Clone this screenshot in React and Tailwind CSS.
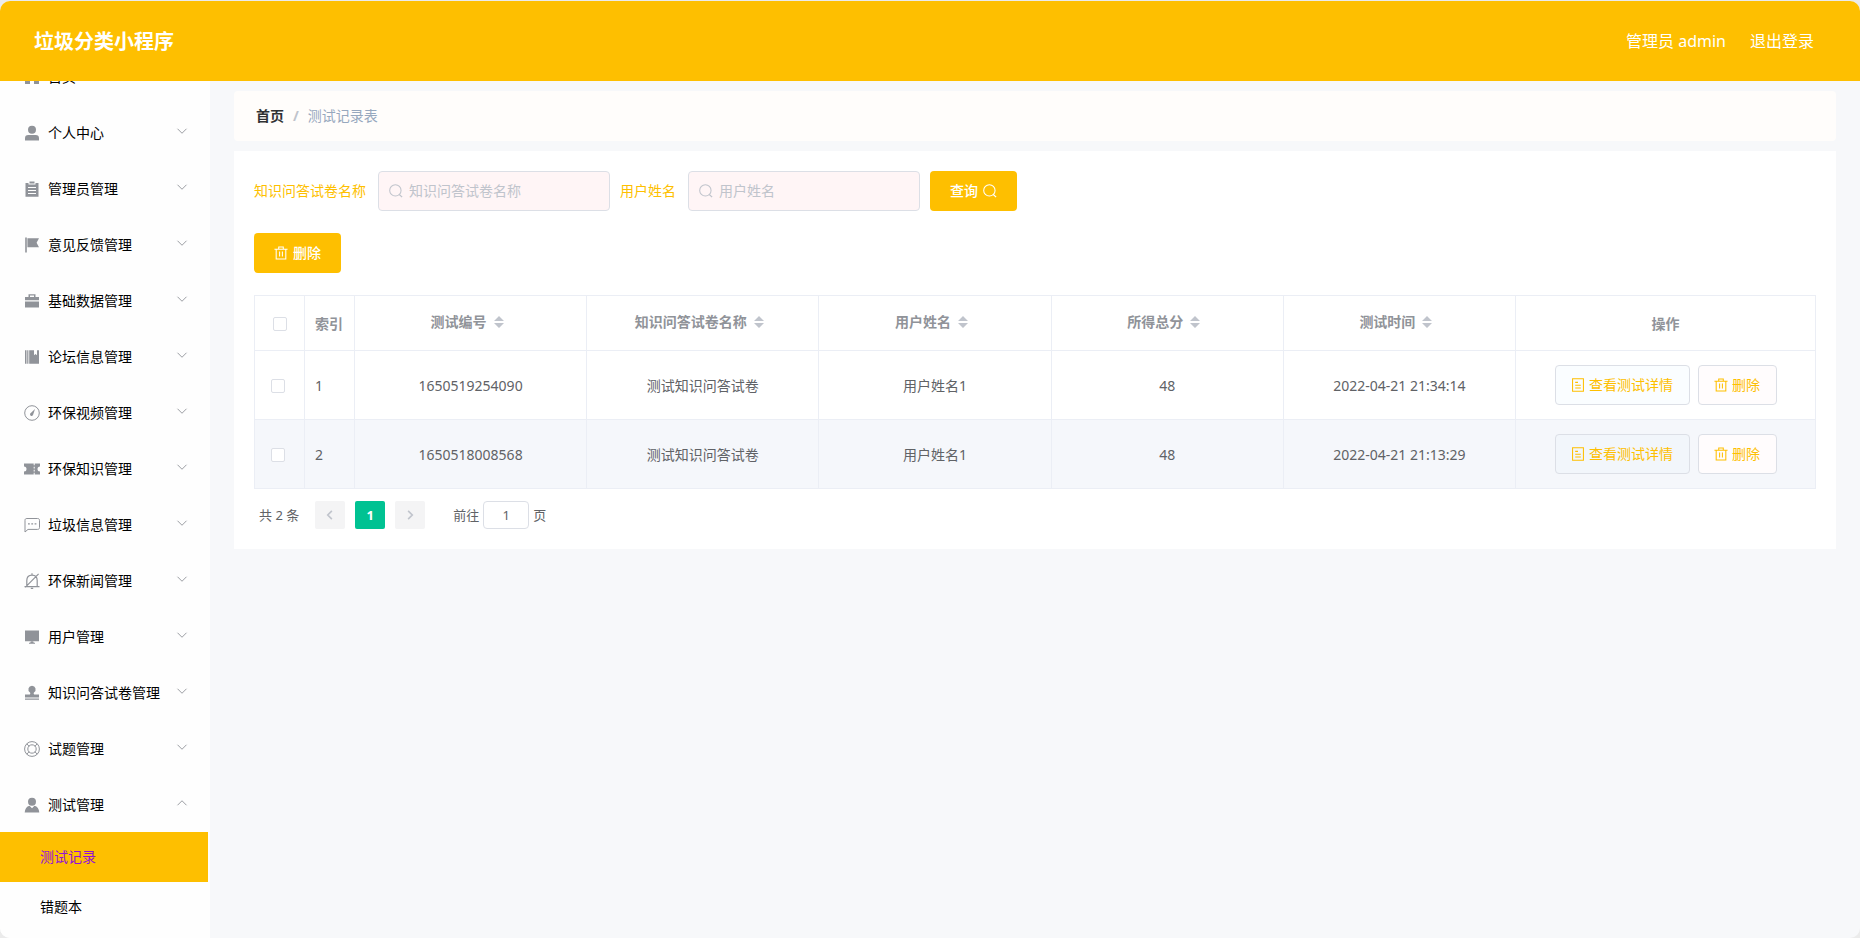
import React, { useState } from 'react';

const stroke = {
  fill: 'none',
  stroke: 'currentColor',
  strokeWidth: 1,
};

/**
 * Icon shapes, all drawn on a 16x16 grid.
 */
const ICONS = {
  home: <path d="M8 1 1 7v8h5v-4h4v4h5V7z" />,
  user: (
    <>
      <circle cx="8" cy="4.7" r="4" />
      <path d="M1 15.5v-2.2a3.3 3.3 0 0 1 3.3-3.3h7.4a3.3 3.3 0 0 1 3.3 3.3v2.2z" />
    </>
  ),
  order: (
    <path
      fillRule="evenodd"
      d="M1.5 2h3v1.5h7V2h3v13.7h-13zM5.5.6h5v2h-5zM4 6v1h8V6zm0 3v1h8V9zm0 3v1h8v-1z"
    />
  ),
  flag: <path d="M1.2.5h1.6v15H1.2zM3.4 1.3H15l-2.4 4.5 2.4 4.5H3.4z" />,
  suitcase: (
    <path
      fillRule="evenodd"
      d="M4.5 4V1.2h7V4H15v3.3H1V4zM6 2.5V4h4V2.5zM1 8.6h14v5.9H1z"
    />
  ),
  books: (
    <path d="M1 1.2h1.5v13.6H1zM3.2 1.2h1.2v13.6H3.2zM5.2 1.2H10v5l1.5-1.2L13 6.2v-5h2v13.6H5.2z" />
  ),
  odometer: (
    <>
      <circle cx="8" cy="8" r="7.3" {...stroke} />
      <path d="M11 4 9.2 9.6a1.6 1.6 0 1 1-2.4-1.6z" />
    </>
  ),
  ticket: (
    <path
      fillRule="evenodd"
      d="M0 2.5h9.7v1.8h1V2.5H16v3a2.5 2.5 0 0 0 0 5v3h-5.3v-1.8h-1v1.8H0v-3a2.5 2.5 0 0 0 0-5zM9.7 5.8v1.6h1V5.8zm0 3v1.6h1V8.8z"
    />
  ),
  chat: (
    <>
      <path d="M1 15V3.3C1 2 1.7 1.5 3 1.5h10.5c1.3 0 2 .6 2 1.8v7.2c0 1.3-.7 1.9-2 1.9H4z" {...stroke} />
      <path d="M4 6.2h1.8v1.4H4zM7.3 6.2h1.8v1.4H7.3zM10.6 6.2h1.8v1.4h-1.8z" />
    </>
  ),
  bellOff: (
    <path
      d="M.5 13.6h15M2.8 13.4V7.6C2.8 4.2 5 2.2 8 2.2s5.2 2 5.2 5.4v5.8M8 .3v1.9M6.8 15.4h2.4M14.6.9 1.2 14.3"
      {...stroke}
      strokeWidth="1.2"
    />
  ),
  monitor: <path d="M1 1.5h14v10.7H1zM6.8 12.6h2.4l.6 1.2H11v1H5v-1h1.2z" />,
  stamp: (
    <path d="M8 .8a3.6 3.6 0 0 1 2 6.6c-.5.4-.4 1.500.2 2.100H15v3H1v-3h4.800c.6-.6.7-1.700.2-2.100A3.600 3.600 0 0 1 8 .8zM1 13.600h14v1.200H1z" />
  ),
  help: (
    <>
      <circle cx="8" cy="8" r="7.4" {...stroke} />
      <circle cx="8" cy="8" r="4.2" {...stroke} />
      <path d="M2.8 2.8 5 5.2M13.2 2.8 11 5.2M2.8 13.2 5 10.8M13.2 13.2 11 10.8" {...stroke} />
    </>
  ),
  userSolid: (
    <>
      <circle cx="8" cy="4.7" r="4" />
      <path d="M.7 15.5C1 11.6 2.6 9.3 5.5 8.7L8 11.2l2.500-2.500c2.900.6 4.500 2.900 4.800 6.800z" />
    </>
  ),
  search: (
    <>
      <circle cx="7.3" cy="7.3" r="6.500" {...stroke} strokeWidth="1.2" />
      <path d="m11.800 12 3.200 3" {...stroke} strokeWidth="1.4" />
    </>
  ),
  trash: (
    <path
      d="M.5 3.6h15M5.4 3.4V1.2h5.2v2.200M2.500 3.800v11h11v-11M6.400 6.300v5.700M9.600 6.300v5.700"
      {...stroke}
      strokeWidth="1.2"
    />
  ),
  document: (
    <path
      d="M1.800.8h12.400v14.400H1.800zM4.800 5h3.200M4.800 8.200h6.400M4.800 11.400h6.400"
      {...stroke}
      strokeWidth="1.2"
    />
  ),
  down: <path d="m2 5 6 6 6-6" {...stroke} strokeWidth="1.2" />,
  up: <path d="m2 11 6-6 6 6" {...stroke} strokeWidth="1.2" />,
  left: <path d="m10.5 2.500-5.500 5.500 5.500 5.500" {...stroke} strokeWidth="2.2" />,
  right: <path d="m5.5 2.500 5.500 5.500-5.500 5.500" {...stroke} strokeWidth="2.2" />,
};

function Icon({ name, className }) {
  return (
    <svg viewBox="0 0 16 16" fill="currentColor" aria-hidden="true" className={className}>
      {ICONS[name]}
    </svg>
  );
}

const MENU = [
  { icon: 'home', label: '首页', leaf: true },
  { icon: 'user', label: '个人中心' },
  { icon: 'order', label: '管理员管理' },
  { icon: 'flag', label: '意见反馈管理' },
  { icon: 'suitcase', label: '基础数据管理' },
  { icon: 'books', label: '论坛信息管理' },
  { icon: 'odometer', label: '环保视频管理' },
  { icon: 'ticket', label: '环保知识管理' },
  { icon: 'chat', label: '垃圾信息管理' },
  { icon: 'bellOff', label: '环保新闻管理' },
  { icon: 'monitor', label: '用户管理' },
  { icon: 'stamp', label: '知识问答试卷管理' },
  { icon: 'help', label: '试题管理' },
  { icon: 'userSolid', label: '测试管理', children: ['测试记录', '错题本'] },
];

const COLUMNS = ['测试编号', '知识问答试卷名称', '用户姓名', '所得总分', '测试时间'];

const ROWS = [
  { id: 1, cells: ['1650519254090', '测试知识问答试卷', '用户姓名1', '48', '2022-04-21 21:34:14'] },
  { id: 2, cells: ['1650518008568', '测试知识问答试卷', '用户姓名1', '48', '2022-04-21 21:13:29'] },
];

function Header() {
  return (
    <header className="flex h-20 shrink-0 items-center justify-between bg-[#febf00] pr-[46px] pl-[34px] text-white">
      <h1 className="pt-0.5 text-xl font-bold">垃圾分类小程序</h1>
      <div className="flex items-center gap-6 text-base">
        <span>管理员 admin</span>
        <a href="#logout">退出登录</a>
      </div>
    </header>
  );
}

function Sidebar() {
  return (
    <nav className="w-[210px] shrink-0 overflow-hidden bg-[#fefefe] pr-0.5 text-sm text-black">
      {/* the list stands scrolled down, so the first entry is half hidden */}
      <ul className="-mt-[33px]">
        {MENU.map((item) => (
          <li key={item.label}>
            <a href="#menu" className="flex h-14 items-center pt-0.5 pr-5 pl-6">
              <Icon name={item.icon} className="size-4 text-[#909399]" />
              <span className="ml-2 grow">{item.label}</span>
              {!item.leaf && (
                <Icon name={item.children ? 'up' : 'down'} className="mb-1 size-3 text-[#909399]" />
              )}
            </a>
            {item.children && (
              <ul>
                {item.children.map((child, i) => (
                  <li key={child}>
                    <a
                      href="#page"
                      className={
                        i === 0
                          ? 'flex h-[50px] items-center bg-[#febf00] pl-10 text-[#9312d6]'
                          : 'flex h-[50px] items-center pl-10'
                      }
                    >
                      {child}
                    </a>
                  </li>
                ))}
              </ul>
            )}
          </li>
        ))}
      </ul>
    </nav>
  );
}

function SearchField({ id, label }) {
  return (
    <div className="flex items-center gap-3">
      <label htmlFor={id} className="text-[#febf00]">
        {label}
      </label>
      <div className="flex h-10 w-[232px] items-center gap-1.5 rounded border border-[#dcdfe6] bg-[#fff5f6] pl-2.5 text-[#c0c4cc]">
        <Icon name="search" className="size-3.5 shrink-0" />
        <input
          id={id}
          type="text"
          placeholder={label}
          className="min-w-0 grow bg-transparent text-[#606266] outline-none placeholder:text-[#c0c4cc]"
        />
      </div>
    </div>
  );
}

function SortCaret() {
  return (
    <span className="flex w-6 justify-center text-[#c0c4cc]">
      <svg viewBox="0 0 10 12" fill="currentColor" aria-hidden="true" className="h-3 w-2.5">
        <path d="M5 0l5 5H0zM5 12l5-5H0z" />
      </svg>
    </span>
  );
}

function Checkbox({ label, checked, onChange }) {
  return (
    <input
      type="checkbox"
      aria-label={label}
      checked={checked}
      onChange={onChange}
      className="block size-3.5 appearance-none rounded-xs border border-[#dcdfe6] bg-white checked:border-[#00c292] checked:bg-[#00c292]"
    />
  );
}

function RecordTable() {
  const [selected, setSelected] = useState([]);

  const toggle = (id) =>
    setSelected(selected.includes(id) ? selected.filter((s) => s !== id) : [...selected, id]);

  const toggleAll = () =>
    setSelected(selected.length === ROWS.length ? [] : ROWS.map((r) => r.id));

  return (
    <table className="w-full table-fixed border-collapse text-center text-[#606266]">
      <colgroup>
        <col className="w-[50px]" />
        <col className="w-[50px]" />
        {COLUMNS.map((c) => (
          <col key={c} />
        ))}
        <col className="w-[300px]" />
      </colgroup>
      <thead>
        <tr className="h-[55px] text-[#909399]">
          <th className="border border-[#ebeef5] pt-0.5 pl-[18px]">
            <Checkbox label="全选" checked={selected.length === ROWS.length} onChange={toggleAll} />
          </th>
          <th className="border border-[#ebeef5] pt-0.5 pl-2.5 text-left font-bold">索引</th>
          {COLUMNS.map((c) => (
            <th key={c} className="border border-[#ebeef5] pb-0.5 font-bold">
              <button type="button" className="inline-flex items-center font-bold">
                {c}
                <SortCaret />
              </button>
            </th>
          ))}
          <th className="border border-[#ebeef5] pt-0.5 font-bold">操作</th>
        </tr>
      </thead>
      <tbody>
        {ROWS.map((row) => (
          <tr key={row.id} className="h-[69px] even:bg-[#f5f7fb]">
            <td className="border border-[#ebeef5] pt-0.5 pl-4">
              <Checkbox
                label={`选择 ${row.id}`}
                checked={selected.includes(row.id)}
                onChange={() => toggle(row.id)}
              />
            </td>
            <td className="border border-[#ebeef5] pt-0.5 pl-2.5 text-left">{row.id}</td>
            {row.cells.map((cell, i) => (
              <td key={i} className="border border-[#ebeef5] pt-0.5">
                {cell}
              </td>
            ))}
            <td className="border border-[#ebeef5]">
              <div className="flex justify-center gap-2 text-[#febf00]">
                <button
                  type="button"
                  className="flex h-10 w-[135px] items-center justify-center gap-1 rounded border border-[#dcdfe6] bg-[#e6f7ff]/20"
                >
                  <Icon name="document" className="size-3.5" />
                  查看测试详情
                </button>
                <button
                  type="button"
                  className="flex h-10 w-[79px] items-center justify-center gap-1 rounded border border-[#dcdfe6] bg-[#fffcfd]"
                >
                  <Icon name="trash" className="size-3.5" />
                  删除
                </button>
              </div>
            </td>
          </tr>
        ))}
      </tbody>
    </table>
  );
}

function Pagination() {
  return (
    <div className="mt-3 flex h-7 items-center pl-[5px] text-[13px] text-[#606266]">
      <span className="mr-4">共 2 条</span>
      <div className="flex gap-2.5">
        <button
          type="button"
          aria-label="上一页"
          disabled
          className="flex h-7 w-[30px] items-center justify-center rounded-xs bg-[#f4f4f5] text-[#c0c4cc]"
        >
          <Icon name="left" className="size-3" />
        </button>
        <button
          type="button"
          className="h-7 w-[30px] rounded-xs bg-[#00c292] font-bold text-white"
        >
          1
        </button>
        <button
          type="button"
          aria-label="下一页"
          disabled
          className="flex h-7 w-[30px] items-center justify-center rounded-xs bg-[#f4f4f5] text-[#c0c4cc]"
        >
          <Icon name="right" className="size-3" />
        </button>
      </div>
      <label className="ml-7 flex items-center gap-1">
        前往
        <input
          type="text"
          defaultValue="1"
          className="h-7 w-[46px] rounded border border-[#dcdfe6] bg-white text-center outline-none"
        />
        页
      </label>
    </div>
  );
}

export default function App() {
  return (
    <div className="h-screen bg-[#ebebeb] pt-px font-['Noto_Sans','Noto_Sans_CJK_SC',sans-serif]">
      <div className="flex h-full flex-col overflow-hidden rounded-[10px] bg-[#f7f8fa]">
        <Header />
        <div className="flex min-h-0 grow">
          <Sidebar />
          <main className="min-w-0 grow overflow-hidden px-6 py-2.5 text-sm">
            {/* Breadcrumb */}
            <nav className="flex h-[50px] items-center gap-[9px] rounded bg-[#fffdfb] px-[22px]">
              <a href="#home" className="font-bold text-[#303133]">
                首页
              </a>
              <span className="font-bold text-[#c0c4cc]">/</span>
              <span className="text-[#97a8be]">测试记录表</span>
            </nav>

            <section className="mt-2.5 bg-white p-5">
              <form className="flex items-center gap-2.5" onSubmit={(e) => e.preventDefault()}>
                <SearchField id="paper" label="知识问答试卷名称" />
                <SearchField id="username" label="用户姓名" />
                <button
                  type="submit"
                  className="flex h-10 w-[87px] items-center justify-center gap-[5px] rounded bg-[#febf00] font-medium text-white"
                >
                  查询
                  <Icon name="search" className="size-3.5" />
                </button>
              </form>

              <button
                type="button"
                className="my-[22px] flex h-10 w-[87px] items-center justify-center gap-[5px] rounded bg-[#febf00] font-medium text-white"
              >
                <Icon name="trash" className="size-3.5" />
                删除
              </button>

              <RecordTable />
              <Pagination />
            </section>
          </main>
        </div>
      </div>
    </div>
  );
}
